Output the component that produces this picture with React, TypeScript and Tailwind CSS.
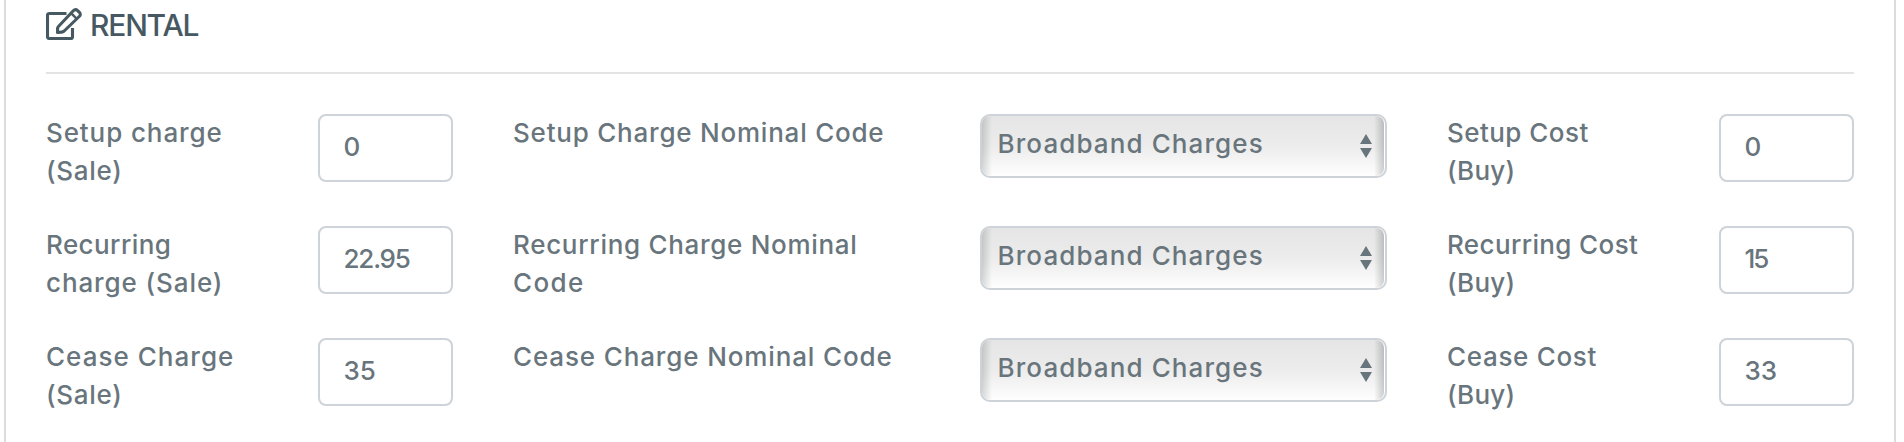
type Line = { text: string; tracking: string };

type Row = {
  sale: Line[];
  saleValue: Line;
  nominal: Line[];
  buy: Line[];
  buyValue: Line;
};

const rows: Row[] = [
  {
    sale: [
      { text: "Setup charge", tracking: "tracking-[0.9px]" },
      { text: "(Sale)", tracking: "tracking-[0.7px]" },
    ],
    saleValue: { text: "0", tracking: "tracking-normal" },
    nominal: [{ text: "Setup Charge Nominal Code", tracking: "tracking-[0.78px]" }],
    buy: [
      { text: "Setup Cost", tracking: "tracking-[0.45px]" },
      { text: "(Buy)", tracking: "tracking-[0.3px]" },
    ],
    buyValue: { text: "0", tracking: "tracking-normal" },
  },
  {
    sale: [
      { text: "Recurring", tracking: "tracking-[0.42px]" },
      { text: "charge (Sale)", tracking: "tracking-[0.9px]" },
    ],
    saleValue: { text: "22.95", tracking: "tracking-[-1.2px]" },
    nominal: [
      { text: "Recurring Charge Nominal", tracking: "tracking-[0.7px]" },
      { text: "Code", tracking: "tracking-[1.35px]" },
    ],
    buy: [
      { text: "Recurring Cost", tracking: "tracking-[0.37px]" },
      { text: "(Buy)", tracking: "tracking-[0.3px]" },
    ],
    buyValue: { text: "15", tracking: "tracking-[-2px]" },
  },
  {
    sale: [
      { text: "Cease Charge", tracking: "tracking-[1.03px]" },
      { text: "(Sale)", tracking: "tracking-[0.7px]" },
    ],
    saleValue: { text: "35", tracking: "tracking-normal" },
    nominal: [{ text: "Cease Charge Nominal Code", tracking: "tracking-[0.87px]" }],
    buy: [
      { text: "Cease Cost", tracking: "tracking-[0.68px]" },
      { text: "(Buy)", tracking: "tracking-[0.3px]" },
    ],
    buyValue: { text: "33", tracking: "tracking-normal" },
  },
];

function Label({ lines }: { lines: Line[] }) {
  return (
    <label className="block whitespace-nowrap leading-[38px]">
      {lines.map((line) => (
        <span key={line.text} className={`block ${line.tracking}`}>
          {line.text}
        </span>
      ))}
    </label>
  );
}

function Field({ value }: { value: Line }) {
  return (
    <div className="flex h-[68px] w-[135px] items-center rounded-lg border-2 border-[#cdd3d8] bg-white pb-[3px] pl-[23.5px]">
      <span className={value.tracking}>{value.text}</span>
    </div>
  );
}

function Select() {
  return (
    <div className="h-16 w-[407px] rounded-[10px] border-2 border-[#cdd3d8] bg-white pr-px">
      <div className="flex h-full items-center justify-between rounded-lg bg-[linear-gradient(to_right,#00000026,transparent_10px,transparent_calc(100%_-_10px),#00000030),linear-gradient(to_bottom,#e5e5e5,#ececec_50%,#fefefe)] pr-3 pl-[15.5px]">
        <span className="pb-1.5 tracking-[1.1px]">Broadband Charges</span>
        <svg className="h-6 w-3" viewBox="0 0 12 24" fill="currentColor">
          <path d="M6 0 12 10H0zM0 14h12L6 24z" />
        </svg>
      </div>
    </div>
  );
}

function EditIcon() {
  return (
    <svg
      className="h-8 w-9"
      viewBox="0 0 36 32"
      fill="none"
      stroke="currentColor"
      strokeWidth="3.1"
      strokeLinejoin="round"
    >
      <path d="M20.5 5.5H3.3Q1.5 5.5 1.5 7.3v21.4q0 1.8 1.8 1.8h21.4q1.8 0 1.8-1.8V20" />
      <path d="M12.2 18.8 27.3 2.8Q29.4.6 31.6 2.6L33.2 4.2Q35.4 6.4 33.2 8.5L18.2 23Q17 24 15.6 24.1L11.5 24.5 11.6 20.4Q11.6 19.4 12.2 18.8Z" />
      <path d="M25 5.2 30.8 10.8" strokeWidth="2.4" />
    </svg>
  );
}

export default function App() {
  return (
    <main className="h-[442px] overflow-hidden bg-white pr-2 pl-1 font-['Inter',sans-serif] text-[26px] font-[450] text-[#69757c]">
      <section className="h-full border-x-2 border-[#dcdcdc] px-10">
        <h2 className="flex h-[74px] items-start gap-2 border-b-2 border-[#e3e3e3] pt-2 text-[30px] leading-[34px] font-[450] text-[#465962]">
          <EditIcon />
          <span className="tracking-[-1.2px]">RENTAL</span>
        </h2>
        <div className="flex flex-col pt-10">
          {rows.map((row) => (
            <div
              key={row.sale[0].text}
              className="grid h-28 grid-cols-[272px_195px_467px_467px_272px_135px] items-start"
            >
              <Label lines={row.sale} />
              <Field value={row.saleValue} />
              <Label lines={row.nominal} />
              <Select />
              <Label lines={row.buy} />
              <Field value={row.buyValue} />
            </div>
          ))}
        </div>
      </section>
    </main>
  );
}
